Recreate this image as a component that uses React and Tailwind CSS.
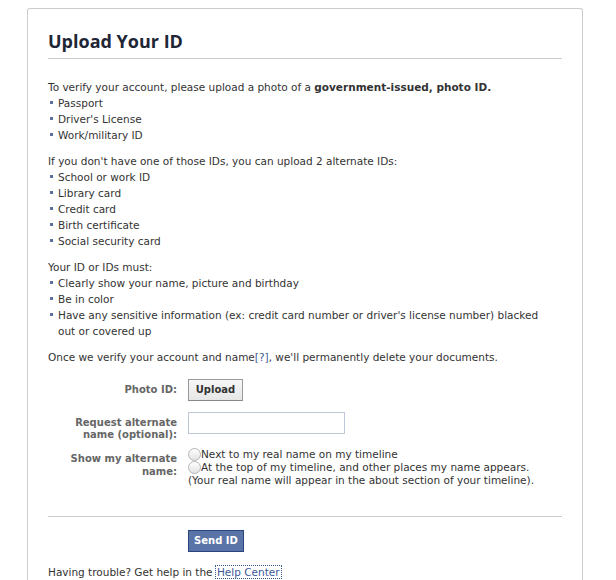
export default function App() {
  const Bullet = ({ children, narrow }) => (
    <li className="flex items-start">
      <span className="mt-[6px] mr-[5px] ml-[2px] h-[3px] w-[3px] shrink-0 bg-[#5b6f9c]" />
      <span className={narrow ? 'max-w-[490px]' : ''}>{children}</span>
    </li>
  )

  const Radio = () => (
    <span className="h-[13px] w-[13px] shrink-0 rounded-full border border-[#b5b5b5] bg-gradient-to-b from-[#fff] to-[#e2e2e2]" />
  )

  return (
    <div className="min-h-[580px] bg-white pt-[8px] pl-[27px] pr-[33px] font-['DejaVu_Sans',sans-serif] text-[10.5px] leading-[16px] text-[#333]">
      <div className="min-h-[600px] rounded-t-[3px] border border-b-0 border-[#ccc] px-[20px] pt-[20px]">
        <h1 className="pb-[5px] font-['Open_Sans',sans-serif] text-[18px] font-bold leading-[24px] text-[#1e2636]">
          Upload Your ID
        </h1>
        <div className="h-px bg-[#ccc]" />

        <div className="pt-[20px]">
          <p>
            To verify your account, please upload a photo of a <b>government-issued, photo ID.</b>
          </p>
          <ul>
            <Bullet>Passport</Bullet>
            <Bullet>Driver's License</Bullet>
            <Bullet>Work/military ID</Bullet>
          </ul>

          <p className="mt-[10px]">If you don't have one of those IDs, you can upload 2 alternate IDs:</p>
          <ul>
            <Bullet>School or work ID</Bullet>
            <Bullet>Library card</Bullet>
            <Bullet>Credit card</Bullet>
            <Bullet>Birth certificate</Bullet>
            <Bullet>Social security card</Bullet>
          </ul>

          <p className="mt-[10px]">Your ID or IDs must:</p>
          <ul>
            <Bullet>Clearly show your name, picture and birthday</Bullet>
            <Bullet>Be in color</Bullet>
            <Bullet narrow>
              Have any sensitive information (ex: credit card number or driver's license number) blacked out or covered up
            </Bullet>
          </ul>

          <p className="mt-[10px]">
            Once we verify your account and name<a className="text-[#3b5998]">[?]</a>, we'll permanently delete your documents.
          </p>
        </div>

        <div className="mt-[14px] flex items-start gap-[11px]">
          <div className="w-[129px] pt-[3px] text-right text-[10px] font-bold text-[#666]">Photo ID:</div>
          <button className="h-[22px] w-[55px] border border-[#999] border-b-[#888] bg-gradient-to-b from-[#f7f7f7] to-[#e6e6e6] text-[10px] font-bold text-[#333]">
            Upload
          </button>
        </div>

        <div className="mt-[11px] flex items-start gap-[11px]">
          <div className="w-[129px] pt-[5px] text-right text-[10px] font-bold leading-[12px] text-[#666]">
            Request alternate
            <br />
            name (optional):
          </div>
          <input className="h-[22px] w-[157px] border border-[#bdc7d8] bg-white" />
        </div>

        <div className="mt-[7px] flex items-start gap-[11px]">
          <div className="w-[129px] pt-[4px] text-right text-[10px] font-bold leading-[13px] text-[#666]">
            Show my alternate
            <br />
            name:
          </div>
          <div className="leading-[13px]">
            <label className="flex items-center">
              <Radio />
              Next to my real name on my timeline
            </label>
            <label className="flex items-center">
              <Radio />
              At the top of my timeline, and other places my name appears.
            </label>
            <div>(Your real name will appear in the about section of your timeline).</div>
          </div>
        </div>

        <div className="mt-[29px] h-px bg-[#ccc]" />

        <div className="mt-[13px] pl-[140px]">
          <button className="h-[22px] w-[56px] border border-[#29447e] bg-[#5b74a8] text-[10px] font-bold text-white">
            Send ID
          </button>
        </div>

        <p className="mt-[12px]">
          Having trouble? Get help in the{' '}
          <a className="px-[1px] outline-1 outline-dotted outline-[#3b5998] text-[#3b5998]">Help Center</a>
        </p>
      </div>
    </div>
  )
}
